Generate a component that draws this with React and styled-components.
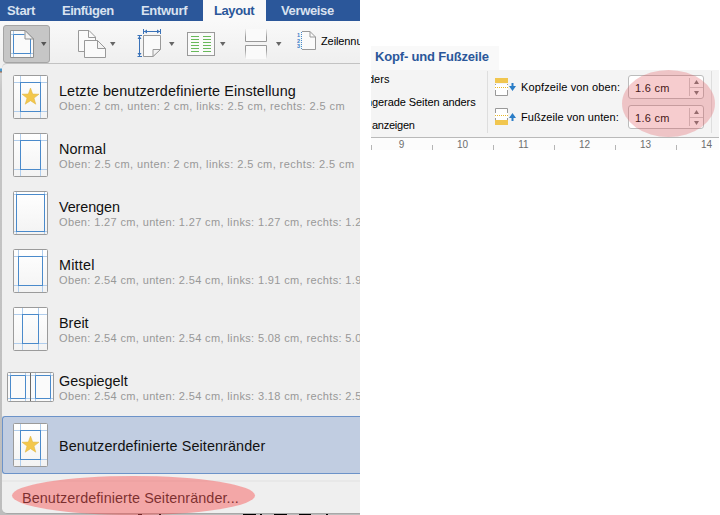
import React from 'react'
import styled, {createGlobalStyle} from 'styled-components'

const GlobalStyle = createGlobalStyle`
    body {
        margin: 0;
        background: #fff;
        font-family: "Liberation Sans", Arial, sans-serif;
        color: #111;
    }

    svg {
        display: block;
        flex: none;
    }
`
const Page = styled.div`
    display: flex;
    align-items: flex-start;
    gap: 11px;
    width: 720px;
    height: 515px;
    overflow: hidden;
    white-space: nowrap;
`
const WordPanel = styled.div`
    flex: none;
    width: 360px;
    height: 515px;
    overflow: hidden;
    background: linear-gradient(#efefef 68px, #4a9ad0 69px, #4a9ad0 71px, #a8643c 72px, #d2d2d2 73px, #c6c6c6 92px, #bdbdbd);
`
const TabBar = styled.div`
    display: flex;
    height: 21px;
    background: #2b579a;
`
const Tab = styled.div`
    box-sizing: border-box;
    flex: none;
    width: ${props => props.$width}px;
    padding-left: ${props => props.$indent}px;
    font-size: 13px;
    font-weight: bold;
    line-height: 21px;
    letter-spacing: ${props => props.$track}px;
    color: ${props => props.$active ? '#2b579a' : '#d9e2f0'};
    background: ${props => props.$active ? '#f9f9f9' : '#2b579a'};
`
const Toolbar = styled.div`
    display: flex;
    align-items: flex-start;
    height: 42px;
    background: linear-gradient(#f9f9f9, #efefef);
`
const ToolButton = styled.div`
    box-sizing: border-box;
    display: flex;
    flex: none;
    width: ${props => props.$width}px;
    height: 38px;
    margin: 4px 0 0 ${props => props.$left}px;
    border: 1px solid ${props => props.$pressed ? '#a5a5a5' : 'transparent'};
    border-radius: 3px;
    background: ${props => props.$pressed ? '#c6c6c6' : 'none'};
`
const ToolLabel = styled.div`
    margin: 8px 0 0 4px;
    font-size: 11px;
    line-height: 14px;
    letter-spacing: -0.1px;
    color: #000;
`
const Menu = styled.div`
    box-sizing: border-box;
    height: 451px;
    margin-left: 2px;
    padding-top: 4px;
    border-top: 1px solid #c2c2c2;
    border-bottom: 1px solid #a8a8a8;
    border-radius: 5px 0 0 5px;
    background: #efefef;
`
const MenuItem = styled.div`
    box-sizing: border-box;
    display: flex;
    align-items: center;
    height: 58px;
    border: 1px solid ${props => props.$selected ? '#6c93c9' : 'transparent'};
    border-right: 0;
    border-radius: 3px 0 0 3px;
    background: ${props => props.$selected ? '#c1cde1' : 'none'};
`
const IconSlot = styled.div`
    display: flex;
    flex: none;
    justify-content: center;
    width: 47px;
    margin: 0 5px 0 4px;
`
const ItemText = styled.div`
    flex: none;
    padding-top: 1px;
`
const ItemTitle = styled.div`
    padding-top: 1px;
    font-size: 14.4px;
    line-height: 17px;
    letter-spacing: ${props => props.$track || 0}px;
`
const ItemDetail = styled.div`
    margin-top: -1px;
    font-size: 11px;
    line-height: 14px;
    letter-spacing: ${props => props.$track || 0.36}px;
    color: #989898;
`
const MenuFooter = styled.div`
    position: relative;
    height: 33px;
    margin-top: 6px;
    padding-left: 20px;
    border-top: 2px solid #e8e8e8;
    font-size: 14.4px;
    line-height: 32px;
    letter-spacing: 0.07px;
    color: #111;
`
const FooterMark = styled.div`
    position: absolute;
    left: 10px;
    top: -6px;
    width: 243px;
    height: 39px;
    border-radius: 50%;
    background: rgba(249, 82, 82, 0.46);
`
const Remains = styled.div`
    height: 1px;
`
const HeaderPanel = styled.div`
    flex: none;
    width: 348px;
    margin-top: 46px;
    overflow: hidden;
`
const HeaderTab = styled.div`
    width: 124px;
    height: 24px;
    padding-left: 4px;
    background: #f9f9f9;
    font-size: 13px;
    font-weight: bold;
    line-height: 22px;
    letter-spacing: -0.18px;
    color: #2b579a;
`
const Ribbon = styled.div`
    position: relative;
    display: flex;
    height: 67px;
    background: #f4f4f4;
    font-size: 11px;
    color: #000;
`
const Options = styled.div`
    box-sizing: border-box;
    display: flex;
    flex: none;
    flex-direction: column;
    align-items: flex-start;
    width: 117px;
    height: 62px;
    margin-top: 1px;
    overflow: hidden;
    border-right: 1px solid #dedede;
`
const Option = styled.div`
    flex: none;
    height: 23px;
    margin-left: ${props => props.$shift}px;
    line-height: 17px;
    letter-spacing: ${props => props.$track || 0}px;
`
const Distances = styled.div`
    width: 223px;
    height: 62px;
    margin-top: 1px;
    border-right: 1px solid #dedede;
`
const DistanceRow = styled.div`
    display: flex;
    align-items: center;
    height: 24px;
    padding: 4px 0 2px 7px;
`
const DistanceLabel = styled.div`
    width: 107px;
    margin-left: 5px;
    letter-spacing: ${props => props.$track}px;
`
const Spinner = styled.div`
    box-sizing: border-box;
    display: flex;
    justify-content: space-between;
    width: 76px;
    height: 24px;
    padding-left: 6px;
    border: 1px solid #bcbcbc;
    border-radius: 3px;
    background: #fff;
    line-height: 24px;
    letter-spacing: 0.3px;
`
const SpinnerMark = styled.div`
    position: absolute;
    left: 251px;
    top: 0;
    width: 93px;
    height: 67px;
    border-radius: 50%;
    background: rgba(225, 80, 85, 0.29);
`
const Ruler = styled.div`
    display: flex;
    height: 12px;
    border-top: 1px solid #b9b9b9;
    background: #fcfcfc;
`
const RulerCell = styled.div`
    position: relative;
    flex: none;
    width: 61px;
    font-size: 10px;
    line-height: 13px;
    text-align: center;
    color: #6e6e6e;

    &::before {
        content: '';
        position: absolute;
        left: 0;
        bottom: 0;
        width: 1px;
        height: 5px;
        background: #b5b5b5;
    }
`

const STAR = '17.5,13 19.7,19 26,19.2 21,23.1 22.8,29.2 17.5,25.7 12.2,29.2 14,23.1 9,19.2 15.3,19'

const PageIcon = ({x1, x2, y1, y2, star}) => (
    <svg width="35" height="44">
        <defs>
            <linearGradient id="paper" x1="0" y1="0" x2="0" y2="1">
                <stop offset="0" stopColor="#fff" />
                <stop offset="1" stopColor="#f3f3f3" />
            </linearGradient>
        </defs>
        <rect x=".5" y=".5" width="34" height="43" rx="1" fill="url(#paper)" stroke="#9b9b9b" />
        <path d={`M${x1} 1V43M${x2} 1V43M1 ${y1}H34M1 ${y2}H34`} stroke="#b0cdec" />
        <rect x={x1} y={y1} width={x2 - x1} height={y2 - y1} fill="none" stroke="#4a8acb" />
        {star && <polygon points={STAR} fill="#f3c74c" stroke="#dcb33f" strokeWidth=".5" />}
    </svg>
)

const MirrorIcon = () => (
    <svg width="47" height="30">
        <rect x=".5" y=".5" width="46" height="29" rx="1" fill="#fafafa" stroke="#9b9b9b" />
        <path d="M3.5 1V29M18.5 1V29M28.5 1V29M43.5 1V29M1 3.5H46M1 26.5H46" stroke="#b0cdec" />
        <path d="M3.5 3.5H18.5V26.5H3.5ZM28.5 3.5H43.5V26.5H28.5Z" fill="none" stroke="#4a8acb" />
        <path d="M23.5 1V29" stroke="#6a6a6a" />
    </svg>
)

const MarginsIcon = () => (
    <svg width="46" height="36">
        <path d="M6.5 4.5H21L29.5 13V31.5H6.5Z" fill="#fafafa" stroke="#8f8f8f" />
        <path d="M9.5 5V31M26.5 13V31M7 8.5H20M7 27.5H29" stroke="#a6c8ea" />
        <path d="M20.5 8.5H9.5V27.5H26.5V13" fill="none" stroke="#4a8acb" />
        <path d="M21 4.5V13H29.5Z" fill="#f2f2f2" stroke="#8f8f8f" />
        <path d="M37 16H42.5L39.75 20Z" fill="#555" />
    </svg>
)

const OrientationIcon = () => (
    <svg width="40" height="36">
        <path d="M1.5 4.5H12L18.5 11V25.5H1.5Z" fill="#fafafa" stroke="#999" />
        <path d="M11.5 4.5V11.5H18.5" fill="none" stroke="#999" />
        <path d="M7.5 14.5H20.5L28.5 22.5V31.5H7.5Z" fill="#fafafa" stroke="#999" />
        <path d="M20.5 14.5V22.5H28.5Z" fill="#f3f3f3" stroke="#999" />
        <path d="M33 16H38.5L35.75 20Z" fill="#666" />
    </svg>
)

const SizeIcon = () => (
    <svg width="40" height="36">
        <path d="M6.5 9.5H23.5V23L16 30.5H6.5Z" fill="#fafafa" stroke="#999" />
        <path d="M16 30.5V23.5H23.5Z" fill="#f3f3f3" stroke="#999" />
        <path d="M6.5 3V8M23.5 3V8M7 5.5H23M0.5 9.5H5M0.5 30.5H5M2.5 10V30" stroke="#3a72b8" />
        <path d="M7 5.5L10 3.5V7.5ZM23 5.5L20 3.5V7.5ZM2.5 10L.5 13H4.5ZM2.5 30L.5 27H4.5Z" fill="#3a72b8" />
        <path d="M32 16H37.5L34.75 20Z" fill="#666" />
    </svg>
)

const ColumnsIcon = () => (
    <svg width="41" height="36">
        <rect x="1.5" y="6.5" width="27" height="23" fill="#fafafa" stroke="#999" />
        <path d="M5 10.5H13M5 13.5H13M5 16.5H13M5 19.5H13M5 22.5H13M5 25.5H13M17 10.5H25M17 13.5H25M17 16.5H25M17 19.5H25M17 22.5H25M17 25.5H25" stroke="#68b95a" />
        <path d="M34 16H39.5L36.75 20Z" fill="#666" />
    </svg>
)

const BreaksIcon = () => (
    <svg width="40" height="36">
        <defs>
            <linearGradient id="fade" gradientUnits="userSpaceOnUse" x1="0" y1="2" x2="0" y2="33">
                <stop offset="0" stopColor="#999" stopOpacity="0" />
                <stop offset=".3" stopColor="#999" />
                <stop offset=".7" stopColor="#999" />
                <stop offset="1" stopColor="#999" stopOpacity="0" />
            </linearGradient>
        </defs>
        <path d="M.5 3V15.5H21.5V3M.5 33V19.5H21.5V33" fill="#fafafa" stroke="url(#fade)" />
        <path d="M31 16H36.5L33.75 20Z" fill="#666" />
    </svg>
)

const LineNumberIcon = () => (
    <svg width="20" height="36">
        <g fill="#3a80c8" fontSize="5.5" fontWeight="bold" fontFamily="Liberation Sans">
            <text x="0" y="11">1</text>
            <text x="0" y="16.5">2</text>
            <text x="0" y="22">3</text>
        </g>
        <path d="M5 5.5H13L18.5 11V23.5H5" fill="#fafafa" />
        <path d="M5 5.5H13L18.5 11V23.5H5M13 5.5V11H18.5" fill="none" stroke="#999" />
        <path d="M4.5 6V24" stroke="#4a8acb" strokeDasharray="1 1" />
    </svg>
)

const HeaderIcon = () => (
    <svg width="21" height="18">
        <path d="M.5 6V17.5H12.5V6" fill="#fff" stroke="#999" />
        <path d="M0 0H13V5H0Z" fill="#f1c64f" />
        <path d="M0 9.5H13" stroke="#fff" strokeWidth="5" />
        <path d="M0 9.5H13" stroke="#e8b92c" strokeDasharray="1 1" />
        <path d="M16.5 5H18.5V8H21L17.5 13L14 8H16.5Z" fill="#2a7dc7" />
    </svg>
)

const FooterIcon = () => (
    <svg width="21" height="18">
        <path d="M.5 12V.5H12.5V12" fill="#fff" stroke="#999" />
        <path d="M0 12H13V17H0Z" fill="#f1c64f" />
        <path d="M0 7.5H13" stroke="#fff" strokeWidth="5" />
        <path d="M0 7.5H13" stroke="#e8b92c" strokeDasharray="1 1" />
        <path d="M16.5 13H18.5V10H21L17.5 5L14 10H16.5Z" fill="#2a7dc7" />
    </svg>
)

const StepperIcon = () => (
    <svg width="14" height="22">
        <path d="M.5 2V20M1 11.5H14" stroke="#ccc" />
        <path d="M5 8H10L7.5 4ZM5 15H10L7.5 19Z" fill="#777" />
    </svg>
)

const items = [
    {title: 'Letzte benutzerdefinierte Einstellung', detail: 'Oben: 2 cm, unten: 2 cm, links: 2.5 cm, rechts: 2.5 cm', margins: [7.5, 27.5, 7.5, 36.5], star: true, track: 0.11, detailTrack: 0.43},
    {title: 'Normal', detail: 'Oben: 2.5 cm, unten: 2 cm, links: 2.5 cm, rechts: 2.5 cm', margins: [7.5, 27.5, 7.5, 36.5], track: 0.1, detailTrack: 0.42},
    {title: 'Verengen', detail: 'Oben: 1.27 cm, unten: 1.27 cm, links: 1.27 cm, rechts: 1.27 cm', margins: [3.5, 31.5, 3.5, 40.5], track: -0.1},
    {title: 'Mittel', detail: 'Oben: 2.54 cm, unten: 2.54 cm, links: 1.91 cm, rechts: 1.91 cm', margins: [5.5, 29.5, 7.5, 36.5], track: 0.2},
    {title: 'Breit', detail: 'Oben: 2.54 cm, unten: 2.54 cm, links: 5.08 cm, rechts: 5.08 cm', margins: [9.5, 25.5, 7.5, 36.5]},
    {title: 'Gespiegelt', detail: 'Oben: 2.54 cm, unten: 2.54 cm, links: 3.18 cm, rechts: 2.54 cm'},
    {title: 'Benutzerdefinierte Seitenränder', margins: [7.5, 27.5, 7.5, 36.5], star: true, selected: true, track: 0.1},
]

const MarginItem = ({title, detail, margins, star, selected, track, detailTrack}) => (
    <MenuItem $selected={selected}>
        <IconSlot>
            {margins
                ? <PageIcon x1={margins[0]} x2={margins[1]} y1={margins[2]} y2={margins[3]} star={star} />
                : <MirrorIcon />}
        </IconSlot>
        <ItemText>
            <ItemTitle $track={track}>{title}</ItemTitle>
            {detail && <ItemDetail $track={detailTrack}>{detail}</ItemDetail>}
        </ItemText>
    </MenuItem>
)

const App = () => {
    return (
        <>
            <GlobalStyle />
            <Page>
                <WordPanel>
                    <TabBar>
                        <Tab $width={55} $indent={7} $track={-0.3}>Start</Tab>
                        <Tab $width={78} $indent={7} $track={-0.5}>Einfügen</Tab>
                        <Tab $width={70} $indent={8} $track={-0.3}>Entwurf</Tab>
                        <Tab $width={63} $indent={11} $track={-0.4} $active>Layout</Tab>
                        <Tab $width={94} $indent={15} $track={-0.35}>Verweise</Tab>
                    </TabBar>
                    <Toolbar>
                        <ToolButton $width={47} $left={3} $pressed><MarginsIcon /></ToolButton>
                        <ToolButton $width={40} $left={26}><OrientationIcon /></ToolButton>
                        <ToolButton $width={40} $left={20}><SizeIcon /></ToolButton>
                        <ToolButton $width={41} $left={9}><ColumnsIcon /></ToolButton>
                        <ToolButton $width={40} $left={18}><BreaksIcon /></ToolButton>
                        <ToolButton $width={64} $left={12}>
                            <LineNumberIcon />
                            <ToolLabel>Zeilennu</ToolLabel>
                        </ToolButton>
                    </Toolbar>
                    <Menu>
                        {items.map(item => <MarginItem key={item.title} {...item} />)}
                        <MenuFooter>
                            Benutzerdefinierte Seitenränder...
                            <FooterMark />
                        </MenuFooter>
                    </Menu>
                    <Remains>
                        <svg width="360" height="1">
                            <path d="M138 .5H142M159 .5H161M243 .5H256M260 .5H262M274 .5H287M299 .5H311M326 .5H328" stroke="#000" />
                        </svg>
                    </Remains>
                </WordPanel>
                <HeaderPanel>
                    <HeaderTab>Kopf- und Fußzeile</HeaderTab>
                    <Ribbon>
                        <Options>
                            <Option $shift={-3}>ders</Option>
                            <Option $shift={-5} $track={-0.08}>ngerade Seiten anders</Option>
                            <Option $shift={1} $track={-0.25}>anzeigen</Option>
                        </Options>
                        <Distances>
                            <DistanceRow>
                                <HeaderIcon />
                                <DistanceLabel $track={0.14}>Kopfzeile von oben:</DistanceLabel>
                                <Spinner>1.6 cm<StepperIcon /></Spinner>
                            </DistanceRow>
                            <DistanceRow>
                                <FooterIcon />
                                <DistanceLabel $track={0.06}>Fußzeile von unten:</DistanceLabel>
                                <Spinner>1.6 cm<StepperIcon /></Spinner>
                            </DistanceRow>
                        </Distances>
                        <SpinnerMark />
                    </Ribbon>
                    <Ruler>
                        {[9, 10, 11, 12, 13, 14].map(n => <RulerCell key={n}>{n}</RulerCell>)}
                    </Ruler>
                </HeaderPanel>
            </Page>
        </>
    )
}

export default App
